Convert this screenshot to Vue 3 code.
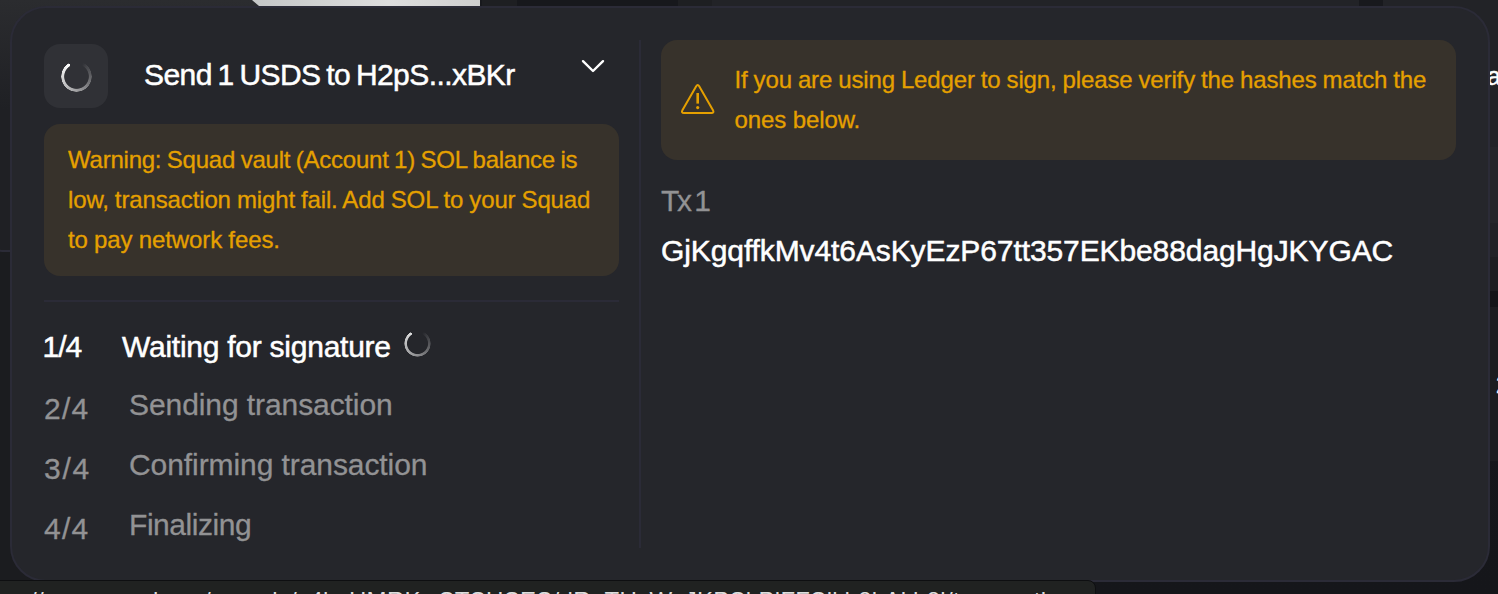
<script setup>
const steps = [
  { n: '1/4', label: 'Waiting for signature', cls: 's1', active: true },
  { n: '2/4', label: 'Sending transaction', cls: 's2' },
  { n: '3/4', label: 'Confirming transaction', cls: 's3' },
  { n: '4/4', label: 'Finalizing', cls: 's4' },
]
</script>

<template>
  <div class="screen">
    <div class="bg-left"></div>
    <div class="bg-top-left"></div>
    <div class="bg-light"></div>
    <div class="bg-dark"></div>
    <div class="bg-right-top"></div>
    <div class="bg-right-a"></div>
    <div class="bg-right-b"></div>
    <span class="bg-text ta">a</span>
    <span class="bg-text tb">2</span>

    <section class="modal">
      <div class="left">
        <header class="head">
          <div class="tile"><div class="spinner big"></div></div>
          <h1><span>Send 1 USDS to H2pS...xBKr</span></h1>
          <svg class="chevron" width="26" height="16" viewBox="0 0 26 16">
            <path d="M3 3.2L13 13L23 3.2" fill="none" stroke="#fff" stroke-width="2.4" stroke-linecap="round" stroke-linejoin="round" />
          </svg>
        </header>
        <div class="warn">
          <p class="w1">Warning: Squad vault (Account 1) SOL balance is</p>
          <p class="w2">low, transaction might fail. Add SOL to your Squad</p>
          <p class="w3">to pay network fees.</p>
        </div>
        <ol class="steps">
          <li v-for="s in steps" :key="s.n" :class="[s.cls, { active: s.active }]">
            <span class="num">{{ s.n }}</span>
            <span class="label">{{ s.label }}</span>
            <div v-if="s.active" class="spinner small"></div>
          </li>
        </ol>
      </div>
      <div class="right">
        <div class="ledger">
          <svg width="36" height="34" viewBox="0 0 36 34" fill="none" stroke="#e5a000" stroke-width="2" stroke-linejoin="round">
            <path d="M16.2 3.2Q17.7 .8 19.2 3.2L33 27.2Q34.4 30 31.4 30H4Q1 30 2.4 27.2Z" />
            <path d="M17.7 10V20.6" stroke-width="2.6" />
            <circle cx="17.7" cy="24.6" r="1.6" fill="#e5a000" stroke="none" />
          </svg>
          <div>
            <p class="l1">If you are using Ledger to sign, please verify the hashes match the</p>
            <p class="l2">ones below.</p>
          </div>
        </div>
        <div class="tx">Tx 1</div>
        <div class="hash">GjKgqffkMv4t6AsKyEzP67tt357EKbe88dagHgJKYGAC</div>
      </div>
    </section>

    <div class="status"><span>//app.squads.so/squads/c4kuHMRKwSTSUSES/dRaTUyWxJKPSi.PiFFSlkh8i.Akh8l/transactions</span></div>
  </div>
</template>

<style>
body { margin: 0; background: #18191d; overflow: hidden; }
</style>
<style scoped>
* { box-sizing: border-box; }
.screen { position: relative; width: 1498px; height: 594px; overflow: hidden; padding: 6px 0 0 10px; background: linear-gradient(#18191d, #15161a); font-family: "Liberation Sans", Arial, sans-serif; }
p, h1, ol { margin: 0; padding: 0; font-weight: 400; }
p, h1 span, .num, .label, .tx, .hash { white-space: nowrap; width: max-content; }
.bg-left { position: absolute; left: 0; top: 0; width: 60px; height: 594px; background: #1b1c1f; }
.bg-top-left { position: absolute; left: -30px; top: 0; width: 510px; height: 252px; background: linear-gradient(#2b2c2f, #1f2024 110px); border: 2px solid #2b2b37; border-top: 0; border-radius: 0 0 0 34px; }
.bg-light { position: absolute; left: 252px; top: 0; width: 228px; height: 6px; background: linear-gradient(90deg, #c5c7c7, #dedede 60%, #cfcfcf); clip-path: polygon(0 0, 100% 0, 100% 100%, 7px 100%); }
.bg-dark { position: absolute; left: 482px; top: 0; width: 230px; height: 6px; background: linear-gradient(90deg, #1e1f22 35px, #17181c 35px 196px, #1e1f22 196px); }
.bg-right-top { position: absolute; left: 712px; right: 0; top: 0; height: 223px; background: linear-gradient(#222327 147px, #25262a 147px); }
.bg-right-a { position: absolute; left: 1359px; top: 0; width: 24px; height: 6px; background: #18191d; }
.bg-right-b { position: absolute; left: 1480px; right: 0; top: 223px; height: 238px; background: linear-gradient(#212226 34px, #1d1e21 34px 68px, #141518 68px 84px, #1c1d20 84px); }
.bg-text { position: absolute; color: #fff; line-height: 30px; font-size: 25px; -webkit-text-stroke: .5px; }
.ta { left: 1487px; top: 61px; }
.tb { left: 1496px; top: 370px; font-size: 24px; }
.modal { position: relative; display: flex; width: 1480px; height: 576px; padding: 32px; border: 2px solid #2b2b37; border-radius: 36px; background: #25262b; }
.left { width: 597px; height: 508px; border-right: 2px solid #2b2b37; padding: 4px 20px 0 0; }
.head { display: flex; height: 64px; }
.tile { display: flex; align-items: center; justify-content: center; width: 64px; height: 64px; border-radius: 16px; background: #303136; }
.spinner { border-radius: 50%; background: conic-gradient(from -20deg, transparent 0 45deg, #ffffff18 65deg, #a0a0a2 200deg, #fff 350deg, transparent 351deg); }
.big { width: 31px; height: 31px; -webkit-mask: radial-gradient(circle closest-side, transparent 11.9px, #000 12.7px 15px, transparent 15.5px); mask: radial-gradient(circle closest-side, transparent 11.9px, #000 12.7px 15px, transparent 15.5px); }
.small { width: 27px; height: 27px; margin: 14px 0 0 13px; -webkit-mask: radial-gradient(circle closest-side, transparent 10.1px, #000 10.9px 12.8px, transparent 13.4px); mask: radial-gradient(circle closest-side, transparent 10.1px, #000 10.9px 12.8px, transparent 13.4px); opacity: .85; }
h1 { width: 436px; padding-left: 36px; color: #fff; font-size: 30px; line-height: 62px; letter-spacing: -.57px; word-spacing: -2px; -webkit-text-stroke: .5px; }
.chevron { margin: 14px 0 0 36px; }
.warn { width: 575px; height: 152px; margin-top: 16px; padding: 16px 24px; border-radius: 16px; background: #37322b; color: #e5a000; }
.warn p, .ledger p { font-size: 24px; line-height: 40px; -webkit-text-stroke: .3px; }
.w1 { letter-spacing: -.23px; word-spacing: -.9px; }
.w2 { letter-spacing: -.13px; word-spacing: -.5px; }
.w3 { letter-spacing: -.1px; word-spacing: -.3px; }
.l1 { letter-spacing: -.14px; word-spacing: -.5px; }
.l2 { letter-spacing: -.1px; }
.steps { margin-top: 24px; border-top: 2px solid #2b2b37; list-style: none; padding-top: 14px; }
li { display: flex; height: 60px; color: #929294; font-size: 30px; line-height: 60px; -webkit-text-stroke: .3px; }
.num, .label { position: relative; }
.num { flex: 0 0 85px; padding-top: 3px; letter-spacing: 1.2px; }
.s3 .num { letter-spacing: 1.8px; }
.s1 .num { flex-basis: 78px; padding-top: 1px; left: -1.5px; letter-spacing: -1px; }
.label { top: -1px; letter-spacing: -.08px; }
.s4 .label { letter-spacing: -.45px; }
.s1 .label { top: 1px; letter-spacing: -.25px; }
li.active { color: #fff; -webkit-text-stroke: .5px; }
.right { padding-left: 20px; width: 815px; }
.ledger { display: flex; width: 795px; height: 120px; padding: 20px 0 0 19px; border-radius: 16px; background: #37322b; color: #e5a000; }
.ledger svg { flex: none; margin: 23px 18.5px 0 0; }
.tx { margin-top: 21px; color: #929294; font-size: 30px; line-height: 40px; letter-spacing: -2.3px; word-spacing: -1.5px; -webkit-text-stroke: .3px; }
.hash { color: #fff; font-size: 30px; line-height: 40px; margin-top: 10px; letter-spacing: -.1px; -webkit-text-stroke: .5px; }
.status { position: absolute; left: -2px; top: 580px; width: 1098px; height: 40px; overflow: hidden; border: 1px solid #0e0f11; border-radius: 0 8px 0 0; background: #202221; color: #ddd; font-size: 24px; line-height: 24px; letter-spacing: .3px; padding: 8px 0 0 31px; }
.status span { white-space: nowrap; }
</style>
